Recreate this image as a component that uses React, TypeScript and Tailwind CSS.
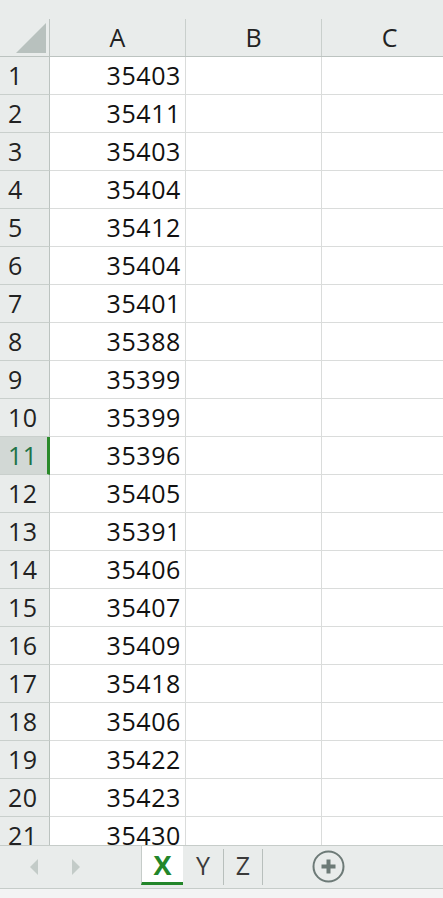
import React from 'react';

const values = [
  35403, 35411, 35403, 35404, 35412, 35404, 35401, 35388, 35399, 35399, 35396,
  35405, 35391, 35406, 35407, 35409, 35418, 35406, 35422, 35423, 35430,
];

const cols = ['A', 'B', 'C'];
const activeRow = 11;

const font = { fontFamily: '"Open Sans", "Noto Sans", sans-serif' };

const App = () => {
  return (
    <div className="w-[443px] h-[898px] flex flex-col bg-white overflow-hidden" style={font}>
      {/* sheet */}
      <div className="flex-1 overflow-hidden">
        {/* column headers */}
        <div className="flex h-[57px] bg-[#e9eceb] border-b border-[#bcc3c0]">
          <div className="w-[50px] shrink-0 flex flex-col">
            <div className="h-[19px]" />
            <div className="flex-1 border-r border-[#bcc3c0] relative">
              <svg className="absolute left-[16px] top-[4px]" width="30" height="30" viewBox="0 0 30 30">
                <polygon points="30,0 30,30 0,30" fill="#b8c1be" />
              </svg>
            </div>
          </div>
          {cols.map((c) => (
            <div key={c} className="w-[136px] shrink-0 flex flex-col">
              <div className="h-[19px]" />
              <div className="flex-1 border-r border-[#c9cfcc] flex items-center justify-center text-[25px] leading-none text-[#222]">
                {c}
              </div>
            </div>
          ))}
        </div>
        {/* rows */}
        {values.map((v, i) => {
          const n = i + 1;
          const active = n === activeRow;
          return (
            <div key={n} className="flex h-[38px] leading-none">
              <div
                className={`w-[50px] shrink-0 flex items-center pl-[8px] text-[25px] tracking-[0.5px] border-b border-[#c9cfcc] ${
                  active
                    ? 'bg-[#d2d8d5] text-[#217346] border-r-[3px] border-r-[#2a8a2a]'
                    : 'bg-[#e9eceb] text-[#222] border-r border-r-[#bcc3c0]'
                }`}
              >
                {n}
              </div>
              <div className="w-[136px] shrink-0 flex items-center justify-end pr-[4px] text-[25px] tracking-[0.6px] text-[#111] border-r border-b border-[#dadcdb]">
                {v}
              </div>
              <div className="w-[136px] shrink-0 border-r border-b border-[#dadcdb]" />
              <div className="w-[136px] shrink-0 border-r border-b border-[#dadcdb]" />
            </div>
          );
        })}
      </div>

      {/* sheet tabs */}
      <div className="h-[44px] shrink-0 bg-[#e9eceb] border-t border-[#c6ccc9] border-b border-b-[#c6ccc9] flex items-stretch leading-none">
        <div className="w-[141px] shrink-0 flex items-center">
          <svg className="ml-[29px]" width="10" height="16" viewBox="0 0 10 16">
            <polygon points="9,0 9,16 1,8" fill="#c3cbc8" />
          </svg>
          <svg className="ml-[32px]" width="10" height="16" viewBox="0 0 10 16">
            <polygon points="1,0 1,16 9,8" fill="#c3cbc8" />
          </svg>
        </div>
        <div className="w-[42px] mb-[3px] bg-white border-l border-[#c6ccc9] border-b-[3px] border-b-[#23862a] flex items-center justify-center text-[27px] font-bold text-[#23862a]">
          X
        </div>
        <div className="w-[40px] flex items-center justify-center text-[25px] text-[#3a3a3a] pb-[3px]">Y</div>
        <div className="w-px bg-[#b8bfbc] my-[3px]" />
        <div className="w-[38px] flex items-center justify-center text-[25px] text-[#3a3a3a] pb-[3px]">Z</div>
        <div className="w-px bg-[#b8bfbc] my-[3px]" />
        <div className="flex-1 flex items-center">
          <svg className="ml-[49px] mb-[1px]" width="33" height="33" viewBox="0 0 33 33">
            <circle cx="16.5" cy="16.5" r="15" fill="none" stroke="#6d7a77" strokeWidth="2" />
            <rect x="9.5" y="14.5" width="14" height="4" fill="#6d7a77" />
            <rect x="14.5" y="9.5" width="4" height="14" fill="#6d7a77" />
          </svg>
        </div>
      </div>
      <div className="h-[9px] shrink-0 bg-[#f3f4f4]" />
    </div>
  );
};

export default App;
